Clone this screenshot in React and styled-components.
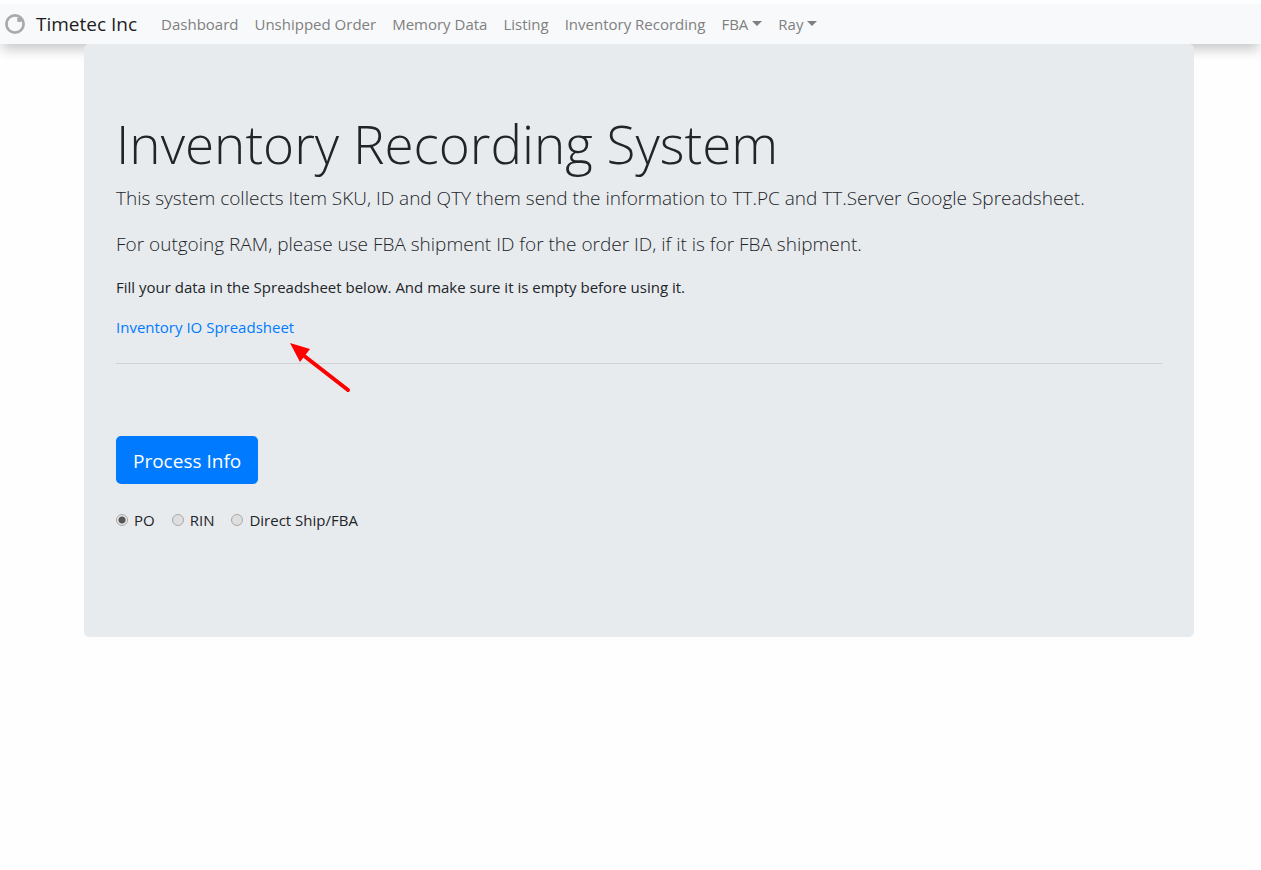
import React from "react";
import styled, { createGlobalStyle } from "styled-components";

const GlobalStyle = createGlobalStyle`
  *, *::before, *::after { box-sizing: border-box; }
  body {
    margin: 0;
    padding-top: 4px;
    background: #fefefe;
    color: #212529;
    font-family: "Segoe UI", "Open Sans", "Noto Sans", sans-serif;
    font-size: 15px;
    line-height: 24px;
  }
`;

const Navbar = styled.nav`
  display: flex;
  align-items: center;
  height: 40px;
  padding: 0 4px;
  background: #f8f9fa;
  box-shadow: 0 8px 12px -2px rgba(0, 0, 0, 0.2);
`;

const Brand = styled.a`
  display: flex;
  align-items: center;
  gap: 10px;
  margin-right: 16px;
  color: #1d1d1d;
  font-size: 19px;
  line-height: 30px;
  text-decoration: none;
  white-space: nowrap;
`;

const NavList = styled.ul`
  display: flex;
  margin: 0;
  padding: 0;
  list-style: none;
`;

const NavLink = styled.a`
  display: flex;
  align-items: center;
  gap: 4px;
  padding: 8px;
  color: #7f7f80;
  text-decoration: none;
  white-space: nowrap;
`;

const Caret = styled.span`
  border-top: 5px solid;
  border-left: 5px solid transparent;
  border-right: 5px solid transparent;
  margin-bottom: 2px;
`;

const Page = styled.main`
  position: relative;
  padding-left: 17px;
`;

const Jumbotron = styled.section`
  max-width: 1110px;
  margin: 0 auto;
  padding: 64px 32px 105px;
  border-radius: 5px;
  background: #e8ebee;
`;

const Title = styled.h1`
  margin: 0 0 4px;
  font-size: 53px;
  font-weight: 300;
  line-height: 71px;
`;

const Lead = styled.p`
  margin: 0 0 16px;
  font-size: 19px;
  font-weight: 300;
  line-height: 30px;
`;

const Paragraph = styled.p`
  position: relative;
  width: fit-content;
  margin: 0 0 16px;
`;

const TextLink = styled.a`
  color: #007bff;
  text-decoration: none;
`;

const Pointer = styled.svg`
  position: absolute;
  top: 26px;
  left: 172px;
`;

const Divider = styled.hr`
  margin: 24px 0 72px;
  border: 0;
  border-top: 1px solid #ced2d5;
`;

const PrimaryButton = styled.button`
  display: block;
  height: 48px;
  padding: 2px 17px 0;
  border: 0;
  border-radius: 5px;
  background: #007bff;
  color: #fff;
  font-family: inherit;
  font-size: 19px;
  line-height: 30px;
`;

const Options = styled.div`
  display: flex;
  gap: 17px;
  margin-top: 24px;
`;

const Option = styled.label`
  display: flex;
  align-items: center;
  gap: 6px;
`;

const Radio = styled.input`
  appearance: none;
  width: 12px;
  height: 12px;
  margin: 0;
  border: 1px solid #a9a9a9;
  border-radius: 50%;
  background: #dedede;

  &:checked {
    background: radial-gradient(circle, #555 0 3px, #e6e6e6 4px);
  }
`;

const links = [
  { text: "Dashboard" },
  { text: "Unshipped Order" },
  { text: "Memory Data" },
  { text: "Listing" },
  { text: "Inventory Recording" },
  { text: "FBA", menu: true },
  { text: "Ray", menu: true },
];

const options = ["PO", "RIN", "Direct Ship/FBA"];

export default function App() {
  return (
    <>
      <GlobalStyle />
      <Navbar>
        <Brand href="#">
          <svg width="22" height="22" viewBox="0 0 22 22" aria-hidden="true">
            <circle cx="11" cy="11" r="8.6" fill="none" stroke="#a9a9a9" strokeWidth="2.7" />
            <path d="M13 5L17.5 4.5L17.5 9H13.5Z" fill="#a9a9a9" />
          </svg>
          Timetec Inc
        </Brand>
        <NavList>
          {links.map(({ text, menu }) => (
            <li key={text}>
              <NavLink href="#">
                {text}
                {menu && <Caret />}
              </NavLink>
            </li>
          ))}
        </NavList>
      </Navbar>
      <Page>
        <Jumbotron>
          <Title>Inventory Recording System</Title>
          <Lead>
            This system collects Item SKU, ID and QTY them send the information to TT.PC and
            TT.Server Google Spreadsheet.
          </Lead>
          <Lead>
            For outgoing RAM, please use FBA shipment ID for the order ID, if it is for FBA
            shipment.
          </Lead>
          <Paragraph>
            Fill your data in the Spreadsheet below. And make sure it is empty before using it.
          </Paragraph>
          <Paragraph>
            <TextLink href="#">Inventory IO Spreadsheet</TextLink>
            <Pointer width="64" height="54" viewBox="0 0 64 54" aria-hidden="true">
              <path d="M15 14L60 49" stroke="#f00" strokeWidth="4" strokeLinecap="round" />
              <path d="M2 2L22 8L12 21Z" fill="#f00" />
            </Pointer>
          </Paragraph>
          <Divider />
          <PrimaryButton type="button">Process Info</PrimaryButton>
          <Options role="radiogroup" aria-label="Record type">
            {options.map((name, index) => (
              <Option key={name}>
                <Radio type="radio" name="record" value={name} defaultChecked={index === 0} />
                {name}
              </Option>
            ))}
          </Options>
        </Jumbotron>
      </Page>
    </>
  );
}
